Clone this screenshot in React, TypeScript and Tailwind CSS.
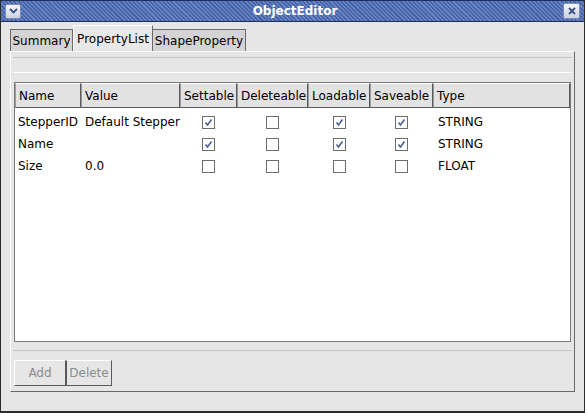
import React from 'react';

const font = { fontFamily: '"DejaVu Sans", "Liberation Sans", sans-serif' };

type Row = { name: string; value: string; flags: boolean[]; type: string };

const rows: Row[] = [
  { name: 'StepperID', value: 'Default Stepper', flags: [true, false, true, true], type: 'STRING' },
  { name: 'Name', value: '', flags: [true, false, true, true], type: 'STRING' },
  { name: 'Size', value: '0.0', flags: [false, false, false, false], type: 'FLOAT' },
];

const cols = [
  { label: 'Name', w: 'w-[66px]' },
  { label: 'Value', w: 'w-[99px]' },
  { label: 'Settable', w: 'w-[57px]' },
  { label: 'Deleteable', w: 'w-[71px]' },
  { label: 'Loadable', w: 'w-[62px]' },
  { label: 'Saveable', w: 'w-[63px]' },
  { label: 'Type', w: 'flex-1' },
];

function Check({ on }: { on: boolean }) {
  return (
    <span className="w-[13px] h-[13px] bg-white border border-[#6e6e6e] flex items-center justify-center">
      {on && (
        <svg width="9" height="9" viewBox="0 0 9 9">
          <path d="M1.5 4.5 L3.5 7 L7.5 1.5" stroke="#4a5e96" strokeWidth="1.6" fill="none" />
        </svg>
      )}
    </span>
  );
}

export default function App() {
  return (
    <div style={font} className="w-[585px] h-[413px] flex flex-col bg-[#e6e6e6] text-[12px] text-black overflow-hidden border-l border-b-2 border-r border-[#2c2c2c]">
      {/* title bar */}
      <div className="h-[22px] flex items-center border-t border-b border-[#1f2e5a] bg-[repeating-linear-gradient(45deg,#6582c2_0px,#6582c2_1.5px,#4864a6_1.5px,#4864a6_3px)] px-[4px]">
        <div className="w-[16px] h-[15px] rounded-[2px] bg-gradient-to-b from-[#f4f6fa] to-[#c9d1e3] border border-[#7a8cb8] flex items-center justify-center">
          <svg width="9" height="6" viewBox="0 0 9 6">
            <path d="M1 1 L4.5 4.5 L8 1" stroke="#3b4f86" strokeWidth="1.8" fill="none" />
          </svg>
        </div>
        <div className="flex-1 text-center text-white font-bold text-[12px] pl-[6px]">ObjectEditor</div>
        <div className="w-[17px] h-[16px] rounded-[2px] bg-gradient-to-b from-[#f4f6fa] to-[#c9d1e3] border border-[#7a8cb8] flex items-center justify-center">
          <svg width="8" height="8" viewBox="0 0 8 8">
            <path d="M1 1 L7 7 M7 1 L1 7" stroke="#3b4f86" strokeWidth="1.8" />
          </svg>
        </div>
      </div>

      {/* tabs */}
      <div className="flex items-end h-[28px] pl-[9px] mt-[1px]">
        <div className="h-[22px] w-[63px] flex items-center justify-center bg-[#d4d4d4] border border-[#6a6a6a] border-b-0 text-[12px]">Summary</div>
        <div className="h-[26px] w-[80px] flex items-center justify-center bg-[#e8e8e8] border border-[#6a6a6a] border-b-0 border-t-white border-l-white text-[12px]">PropertyList</div>
        <div className="h-[22px] w-[93px] flex items-center justify-center bg-[#d4d4d4] border border-[#6a6a6a] border-b-0 border-l-0 text-[12px]">ShapeProperty</div>
      </div>

      {/* panel */}
      <div className="mx-[9px] h-[341px] border border-white border-r-[#6a6a6a] border-b-[#6a6a6a] flex flex-col">
        <div className="mx-[2px] mt-[5px] h-[16px] border-t border-b border-[#c6c6c6] border-b-white" />
        <div className="mx-[3px] mt-[9px] h-[260px] border border-[#7a7a7a] bg-white flex flex-col">
          <div className="flex h-[25px] bg-[#e2e2e2]">
            {cols.map((c) => (
              <div key={c.label} className={`${c.w} h-full flex items-center pl-[3px] border border-[#5a5a5a] border-t-white border-l-[#9a9a9a] text-[12px]`}>
                {c.label}
              </div>
            ))}
          </div>
          <div className="flex flex-col pt-[3px]">
            {rows.map((r) => (
              <div key={r.name} className="flex h-[22px] items-center text-[12px]">
                <div className="w-[66px] pl-[3px]">{r.name}</div>
                <div className="w-[99px] pl-[4px]">{r.value}</div>
                {r.flags.map((f, i) => (
                  <div key={i} className={`${cols[i + 2].w} flex justify-center`}>
                    <Check on={f} />
                  </div>
                ))}
                <div className="flex-1 pl-[5px]">{r.type}</div>
              </div>
            ))}
          </div>
        </div>
        <div className="mx-[2px] mt-[8px] flex-1 border-t border-[#c6c6c6] pt-[9px] px-[1px]">
          <div className="flex">
            <button className="w-[52px] h-[26px] border border-[#5a5a5a] border-t-white border-l-white text-[#8c8c8c] text-[12px] bg-[#e6e6e6]">Add</button>
            <button className="w-[46px] h-[26px] border border-[#5a5a5a] border-t-white border-l-[#5a5a5a] text-[#8c8c8c] text-[12px] bg-[#e6e6e6]">Delete</button>
          </div>
        </div>
      </div>
    </div>
  );
}
